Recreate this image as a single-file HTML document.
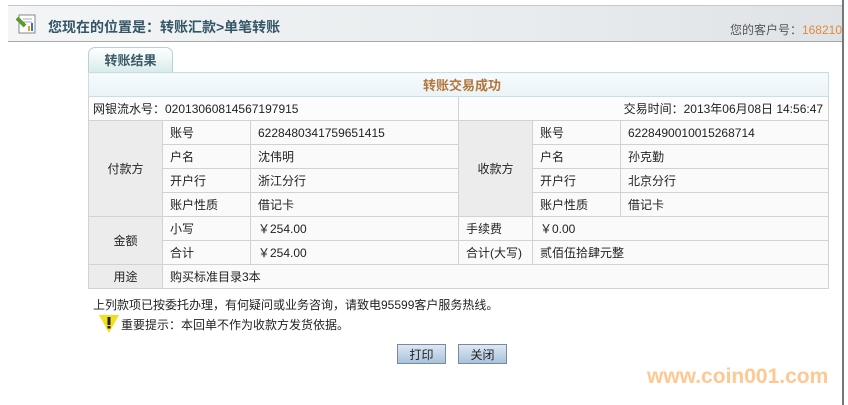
<!DOCTYPE html>
<html><head><meta charset="utf-8"><style>
body{margin:0;width:848px;height:405px;background:#fff;font-family:"Liberation Sans","Noto Sans CJK SC",sans-serif;font-size:12px;color:#222;position:relative;overflow:hidden}
.hdr{position:absolute;left:8px;top:5px;width:834px;height:35px;border-top:1px solid #c8c8c8;border-bottom:1px solid #a8a8a8;background:linear-gradient(to right,#f3f5f6,#e8ecee 60%,#dfe3e6);}
.hdr .t{position:absolute;left:40px;top:11px;font-size:14px;font-weight:bold;color:#335566}
.hdr .c{position:absolute;right:0;top:15px;font-size:12px;color:#555}
.hdr .c b{font-weight:normal;color:#e08a40}
.tab{position:absolute;left:88px;top:47px;width:85px;height:25px;border:1px solid #b8d0d6;border-bottom:none;border-radius:7px 7px 0 0;background:linear-gradient(#fff,#d8ecea);font-weight:bold;font-size:13px;text-align:center;line-height:25px;box-sizing:border-box;color:#3a5a66}
table{position:absolute;left:88px;top:72px;border-collapse:collapse;table-layout:fixed;width:740px}
td{border:1px solid #d2d2d2;height:23px;padding:0 0 0 7px;background:#fafafa;white-space:nowrap;font-size:12px}
td.l{background:#ececec;text-align:center;padding:0}
.title td{background:linear-gradient(#f6fbfd,#eaf3f7);border-color:#c8dde4;text-align:center;color:#b2763a;font-weight:bold;font-size:13px;height:23px}
.note{position:absolute;left:93px;top:296px;font-size:12px}
.note2{position:absolute;left:121px;top:316px;font-size:12px}
.btn{position:absolute;top:344px;height:20px;width:49px;border:1px solid #7a8a9a;background:linear-gradient(#dce8f4,#a9c2dc);text-align:center;line-height:20px;font-size:12px;box-sizing:border-box}
.wm{position:absolute;left:647px;top:365px;font-size:21px;font-weight:bold;color:#ffc890}
.sb{position:absolute;left:842px;top:0;width:2px;height:405px;background:#777}
</style></head><body>
<div class="hdr">
<svg style="position:absolute;left:8px;top:7px" width="22" height="22" viewBox="0 0 22 22"><rect x="3" y="2" width="16" height="18" fill="#fff" stroke="#888"/><line x1="7" y1="6" x2="16" y2="6" stroke="#aaa"/><line x1="7" y1="9" x2="16" y2="9" stroke="#aaa"/><rect x="12" y="13" width="2" height="5" fill="#e9a020"/><rect x="15" y="10" width="2" height="8" fill="#3a70c0"/><path d="M1 5 L9 13" stroke="#5a9a30" stroke-width="4"/></svg>
<div class="t">您现在的位置是：转账汇款&gt;单笔转账</div>
<div class="c">您的客户号：<b>168210</b></div>
</div>
<div class="tab">转账结果</div>
<table>
<colgroup><col style="width:74px"><col style="width:88px"><col style="width:208px"><col style="width:74px"><col style="width:88px"><col style="width:208px"></colgroup>
<tr class="title"><td colspan="6">转账交易成功</td></tr>
<tr><td colspan="3" style="padding-left:4px;background:#fcfcfc">网银流水号：02013060814567197915</td><td colspan="3" style="text-align:right;padding-right:5px;background:#fcfcfc">交易时间：2013年06月08日 14:56:47</td></tr>
<tr><td class="l" rowspan="4">付款方</td><td>账号</td><td>6228480341759651415</td><td class="l" rowspan="4">收款方</td><td>账号</td><td>6228490010015268714</td></tr>
<tr><td>户名</td><td>沈伟明</td><td>户名</td><td>孙克勤</td></tr>
<tr><td>开户行</td><td>浙江分行</td><td>开户行</td><td>北京分行</td></tr>
<tr><td>账户性质</td><td>借记卡</td><td>账户性质</td><td>借记卡</td></tr>
<tr><td class="l" rowspan="2">金额</td><td>小写</td><td>￥254.00</td><td>手续费</td><td colspan="2">￥0.00</td></tr>
<tr><td>合计</td><td>￥254.00</td><td>合计(大写)</td><td colspan="2">贰佰伍拾肆元整</td></tr>
<tr><td class="l">用途</td><td colspan="5">购买标准目录3本</td></tr>
</table>
<div class="note">上列款项已按委托办理，有何疑问或业务咨询，请致电95599客户服务热线。</div>
<svg style="position:absolute;left:98px;top:314px" width="22" height="20" viewBox="0 0 22 20"><path d="M1 1 L21 1 L11 19 Z" fill="#f2e020"/><rect x="9.5" y="3" width="3" height="8" fill="#222"/><rect x="9.5" y="12" width="3" height="2.5" fill="#222"/></svg>
<div class="note2">重要提示：本回单不作为收款方发货依据。</div>
<div class="btn" style="left:397px">打印</div>
<div class="btn" style="left:458px">关闭</div>
<div class="wm">www.coin001.com</div>
<div class="sb"></div>
</body></html>
